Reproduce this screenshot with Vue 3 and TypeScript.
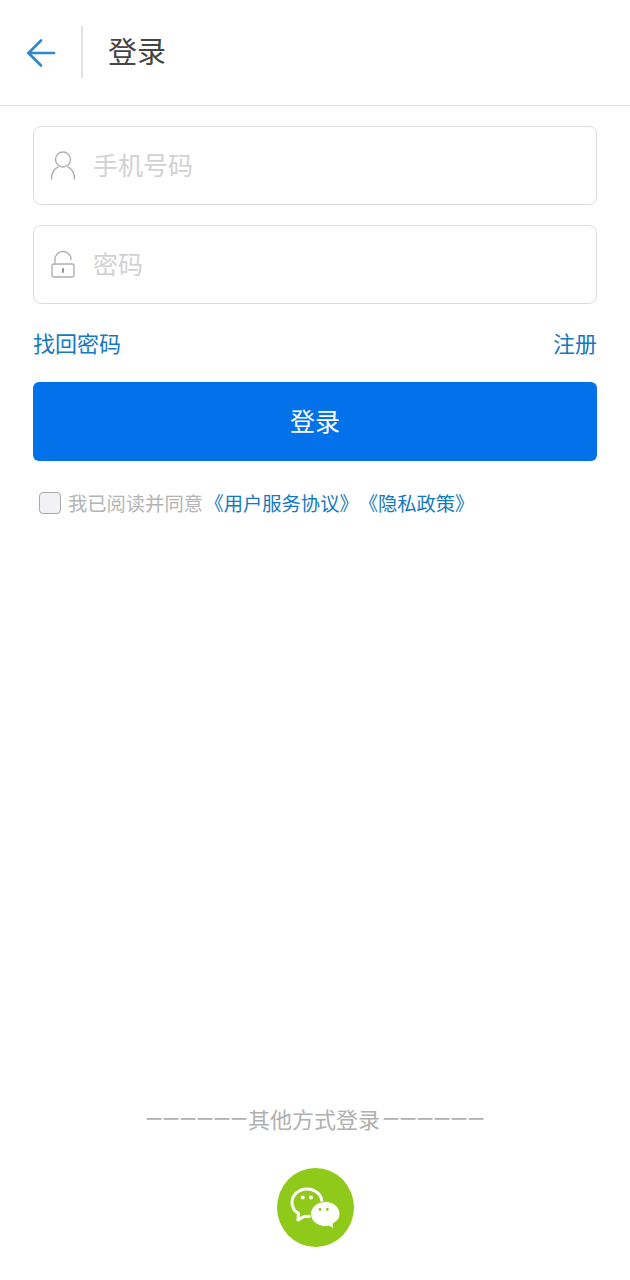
<script setup lang="ts">
const title: string = '登录'
</script>

<template>
  <div class="page">
    <header class="bar">
      <button class="back" aria-label="返回">
        <svg width="30" height="28" viewBox="0 0 30 28" fill="none" stroke="#2d88cf" stroke-width="2.6" stroke-linecap="round" stroke-linejoin="round">
          <path d="M2.500 14H28" />
          <path d="M15 1.500 2.500 14 15 26.500" />
        </svg>
      </button>
      <span class="vline"></span>
      <h1 class="title">{{ title }}</h1>
    </header>

    <main class="form">
      <label class="field">
        <svg class="ficon" width="26" height="30" viewBox="0 0 26 30" fill="none" stroke="#b0b0b0" stroke-width="1.400" stroke-linecap="round">
          <circle cx="13" cy="8.500" r="7.500" />
          <path d="M1.500 28c0-6 2.500-10 6.500-12" />
          <path d="M18 16c4 2 6.500 6 6.500 12" />
        </svg>
        <span class="ph">手机号码</span>
      </label>
      <label class="field">
        <svg class="ficon" width="26" height="30" viewBox="0 0 26 30" fill="none" stroke="#b0b0b0" stroke-width="1.400" stroke-linecap="round">
          <path d="M5 13V9.500a8 8 0 0 1 16 0" />
          <rect x="2" y="14" width="22" height="13" rx="2" />
          <path d="M13 19v3" stroke="#888" stroke-width="1.800" />
        </svg>
        <span class="ph">密码</span>
      </label>

      <div class="links">
        <a class="link">找回密码</a>
        <a class="link">注册</a>
      </div>

      <button class="submit"><span class="submit-label">登录</span></button>

      <div class="agree">
        <span class="check"></span>
        <span class="agree-text">我已阅读并同意<span class="blue">《用户服务协议》《隐私政策》</span></span>
      </div>
    </main>

    <footer class="other">
      <div class="other-text"><span class="dashes">一一一一一一</span>其他方式登录<span class="dashes dashes-right">一一一一一一</span></div>
      <div class="wechat">
        <svg width="52" height="44" viewBox="0 0 52 44">
          <path d="M17 3C8.700 3 2 8.900 2 16.500c0 4.700 2.600 8.700 6.500 11.100L8 34l6.500-3.700c.8 .1 1.700 .2 2.500 .2 8.300 0 15-6.200 15-13.900S25.300 3 17 3Z" fill="none" stroke="#fff" stroke-width="3" stroke-linejoin="round" />
          <circle cx="12.700" cy="11.500" r="2" fill="#fff" />
          <circle cx="21" cy="11.500" r="2" fill="#fff" />
          <path d="M35.500 15.500C27.200 15.500 20.500 21.200 20.500 28S27.200 40.500 35.500 40.500c1.300 0 2.500-.1 3.700-.4L44 43l-1-5.300c4.200-2.300 7-5.700 7-9.700 0-6.800-6.200-12.500-14.500-12.500Z" fill="#fff" stroke="#8fca1a" stroke-width="1" />
          <circle cx="30" cy="23.500" r="1.400" fill="#8fca1a" />
          <circle cx="37.300" cy="23.500" r="1.400" fill="#8fca1a" />
        </svg>
      </div>
    </footer>
  </div>
</template>

<style scoped>
.page {
  width: 630px;
  height: 1280px;
  display: flex;
  flex-direction: column;
  background: #fff;
  font-family: "Noto Sans CJK SC", "Liberation Sans", sans-serif;
  box-sizing: border-box;
}
.bar {
  height: 106px;
  box-sizing: border-box;
  flex: none;
  display: flex;
  align-items: center;
  border-bottom: 1px solid #dcdcdc;
  padding-bottom: 1px;
}
.back {
  margin: 2px 0 0 26px;
  width: 30px;
  height: 28px;
  padding: 0;
  border: 0;
  background: none;
  display: block;
}
.vline {
  width: 2px;
  height: 52px;
  background: #e2e2e2;
  margin-left: 25px;
}
.title {
  margin: 0 0 0 25px;
  padding-bottom: 4px;
  font-size: 29px;
  font-weight: 400;
  color: #444;
  line-height: 40px;
}
.form {
  padding: 20px 33px 0;
  display: flex;
  flex-direction: column;
}
.field {
  height: 79px;
  box-sizing: border-box;
  border: 1px solid #dcdcdc;
  border-radius: 8px;
  display: flex;
  align-items: center;
  padding-left: 16px;
  margin-bottom: 20px;
}
.ficon {
  flex: none;
}
.ph {
  margin-left: 17px;
  padding-bottom: 4px;
  font-size: 25px;
  color: #d2d2d2;
  line-height: 36px;
}
.links {
  display: flex;
  justify-content: space-between;
  height: 40px;
  align-items: center;
  margin-bottom: 18px;
}
.link {
  padding-bottom: 4px;
  font-size: 22px;
  color: #1479c0;
  line-height: 32px;
}
.submit {
  height: 79px;
  border: 0;
  border-radius: 6px;
  background: #0372ea;
  color: #fff;
  font-family: inherit;
  font-size: 25px;
  padding: 0;
}
.submit-label {
  display: block;
  padding-bottom: 4px;
}
.agree {
  display: flex;
  align-items: center;
  margin-top: 28px;
  padding-left: 6px;
}
.check {
  width: 22px;
  height: 22px;
  box-sizing: border-box;
  border: 1.500px solid #a9a9a9;
  border-radius: 4px;
  background: #f2f2f4;
  flex: none;
}
.agree-text {
  margin-left: 7px;
  font-size: 19.300px;
  color: #b4b4b4;
  line-height: 28px;
  white-space: nowrap;
  text-spacing-trim: space-all;
  font-kerning: none;
}
.blue {
  color: #1479c0;
  margin-left: 1.500px;
}
.other {
  margin-top: auto;
  padding-bottom: 33px;
  display: flex;
  flex-direction: column;
  align-items: center;
}
.other-text {
  display: flex;
  align-items: center;
  height: 32px;
  margin-left: 1px;
  font-size: 22px;
  color: #b0b0b0;
  line-height: 32px;
  white-space: nowrap;
  margin-bottom: 34px;
}
.dashes {
  font-size: 16px;
  letter-spacing: 1px;
  font-weight: 500;
}
.dashes-right {
  margin-left: 3px;
}
.wechat {
  width: 77px;
  height: 79px;
  margin-left: 1px;
  border-radius: 50%;
  background: #8fca1a;
  display: flex;
  align-items: center;
  justify-content: center;
}
</style>
